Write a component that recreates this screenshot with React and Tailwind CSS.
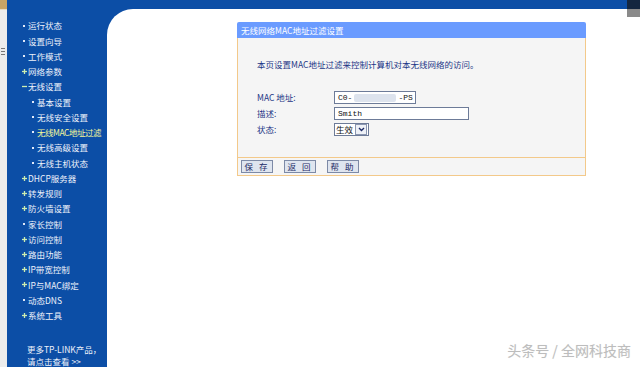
import React from "react";

const menu = [
  { t: "运行状态", k: "dot" },
  { t: "设置向导", k: "dot" },
  { t: "工作模式", k: "dot" },
  { t: "网络参数", k: "plus" },
  { t: "无线设置", k: "minus" },
  { t: "基本设置", k: "sub" },
  { t: "无线安全设置", k: "sub" },
  { t: "无线MAC地址过滤", k: "sub", on: true },
  { t: "无线高级设置", k: "sub" },
  { t: "无线主机状态", k: "sub" },
  { t: "DHCP服务器", k: "plus" },
  { t: "转发规则", k: "plus" },
  { t: "防火墙设置", k: "plus" },
  { t: "家长控制", k: "dot" },
  { t: "访问控制", k: "plus" },
  { t: "路由功能", k: "plus" },
  { t: "IP带宽控制", k: "plus" },
  { t: "IP与MAC绑定", k: "plus" },
  { t: "动态DNS", k: "dot" },
  { t: "系统工具", k: "plus" },
];

function Mark({ k }) {
  if (k === "plus" || k === "minus") {
    return (
      <svg width="5" height="5" viewBox="0 0 5 5" className="shrink-0">
        <path d="M0 2.5 H5" stroke="#cdeeb0" strokeWidth="1.3" />
        {k === "plus" && <path d="M2.5 0 V5" stroke="#cdeeb0" strokeWidth="1.3" />}
      </svg>
    );
  }
  return <div className="w-[2px] h-[2px] ml-[1px] mr-[2px] bg-[#dfe8f8] shrink-0" />;
}

function MenuItem({ item }) {
  const sub = item.k === "sub";
  return (
    <div
      className={`flex items-center h-[15.3px] whitespace-nowrap ${sub ? "pl-[24px]" : "pl-[15px]"}`}
    >
      <Mark k={item.k} />
      <span
        className={`ml-[1px] ${item.on ? "text-[#f4f79a] tracking-[-0.5px]" : "text-[#eef2fb]"}`}
      >
        {item.t}
      </span>
    </div>
  );
}

function Btn({ children }) {
  return (
    <button className="h-[13px] w-[32px] border border-[#7d8aa6] bg-[#dfe5ef] text-[8.5px] leading-none text-[#1c2a66] tracking-[2px]">
      {children}
    </button>
  );
}

export default function App() {
  return (
    <div
      className="w-[640px] h-[367px] flex overflow-hidden bg-[#0c4ea6] text-[8.5px]"
      style={{ fontFamily: '"Noto Sans CJK SC", "Liberation Sans", sans-serif' }}
    >
      {/* left window edge */}
      <div className="w-[7px] flex flex-col shrink-0">
        <div className="h-[9px] bg-[#c9a565]" />
        <div className="h-px bg-[#e9dcc0]" />
        <div className="flex-1 bg-[#ececec] pt-[38px] pl-px">
          <div className="w-[4px] h-px bg-[#777] mb-[2px]" />
          <div className="w-[4px] h-px bg-[#777] mb-[2px]" />
          <div className="w-[4px] h-px bg-[#777]" />
        </div>
      </div>

      <div className="flex-1 flex flex-col">
        <div className="h-[9px] flex shrink-0">
          <div className="flex-1" />
          <div className="w-[13px] bg-[#14263f]" />
        </div>

        <div className="flex-1 flex min-h-0">
          {/* sidebar */}
          <div className="w-[100px] shrink-0 flex flex-col pt-[9px] text-[8.5px] leading-none">
            {menu.map((m) => (
              <MenuItem key={m.t} item={m} />
            ))}
            <div className="mt-[20px] pl-[20px] text-[#eef2fb] leading-[12px] whitespace-nowrap">
              <div>更多TP-LINK产品，</div>
              <div>请点击查看 &gt;&gt;</div>
            </div>
          </div>

          {/* main */}
          <div className="flex-1 bg-white rounded-tl-[26px] relative">
            <div className="absolute right-0 top-0 w-[13px] h-[8px] bg-[#8a8a8a]" />

            <div className="ml-[130px] mt-[13px] w-[349px] flex flex-col">
              <div className="h-[16px] bg-[#6a9bff] rounded-t-[2px] flex items-center pl-[4px] text-white text-[8.5px]">
                无线网络MAC地址过滤设置
              </div>
              <div className="border border-t-0 border-[#f3c98a] bg-[#f5f5f5]">
                <div className="h-[119px] pl-[19px] pt-[20px] text-[#1c3686]">
                  <div className="h-[12px] leading-[12px]">
                    本页设置MAC地址过滤来控制计算机对本无线网络的访问。
                  </div>
                  <div className="mt-[21px] flex items-center h-[13px]">
                    <div className="w-[77px]">MAC 地址:</div>
                    <div className="w-[82px] h-[13px] border border-[#6d7b98] bg-white flex items-center pl-[3px] text-[8px] text-[#111]" style={{ fontFamily: '"Liberation Mono", monospace' }}>
                      <span>C0-</span>
                      <span className="ml-[2px] w-[42px] h-[8px] bg-[#cfd7e6] opacity-70 rounded-[2px]" />
                      <span className="ml-[2px]">-PS</span>
                    </div>
                  </div>
                  <div className="mt-[3px] flex items-center h-[13px]">
                    <div className="w-[77px]">描述:</div>
                    <div className="w-[135px] h-[13px] border border-[#6d7b98] bg-white flex items-center pl-[3px] text-[8px] text-[#111]" style={{ fontFamily: '"Liberation Mono", monospace' }}>
                      Smith
                    </div>
                  </div>
                  <div className="mt-[3px] flex items-center h-[13px]">
                    <div className="w-[77px]">状态:</div>
                    <div className="w-[35px] h-[13px] border border-[#6d7b98] bg-white flex items-center text-[#111]">
                      <span className="pl-[1px] flex-1">生效</span>
                      <span className="w-[12px] h-[11px] mr-px border border-[#8a96b0] bg-[#eef1f7] flex items-center justify-center">
                        <svg width="7" height="5" viewBox="0 0 7 5">
                          <path d="M1 1 L3.5 3.5 L6 1" fill="none" stroke="#1c2a66" strokeWidth="1.4" />
                        </svg>
                      </span>
                    </div>
                  </div>
                </div>
                <div className="h-px bg-[#f3c98a]" />
                <div className="h-[17px] flex items-center pl-[3px] gap-[11px]">
                  <Btn>保 存</Btn>
                  <Btn>返 回</Btn>
                  <Btn>帮 助</Btn>
                </div>
              </div>
            </div>

            <div
              className="absolute right-[9px] bottom-[6px] text-[14px] text-[#bdbdbd]"
              style={{ textShadow: "0 0 1px #e8e8e8" }}
            >
              头条号 / 全网科技商
            </div>
          </div>
        </div>
      </div>
    </div>
  );
}
